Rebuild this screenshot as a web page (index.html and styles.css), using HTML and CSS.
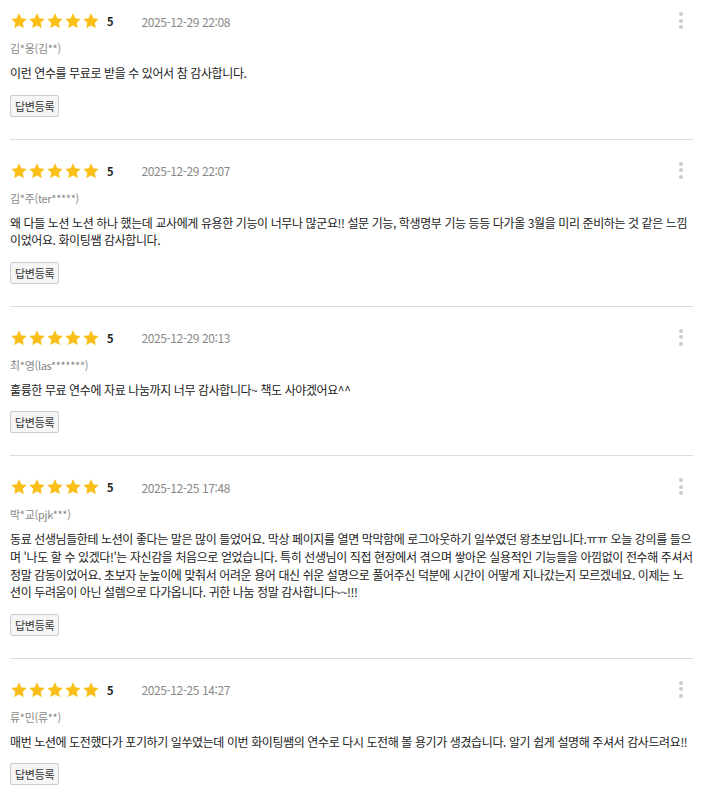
FILE: index.html
```html
<!DOCTYPE html>
<html lang="ko">
<head>
<meta charset="utf-8">
<link rel="stylesheet" href="styles.css">
</head>
<body>
<svg width="0" height="0" class="defs">
  <defs>
    <symbol id="star" viewBox="0 0 24 24"><path d="M12 1.8l3.1 6.6 7.2.9-5.3 5 1.4 7.1L12 17.9l-6.4 3.5 1.4-7.1-5.3-5 7.2-.9z" fill="#FBBF1A"/></symbol>
  </defs>
</svg>
<ul class="reviews">
  <li class="review">
    <div class="head">
      <span class="stars"><svg><use href="#star"/></svg><svg><use href="#star"/></svg><svg><use href="#star"/></svg><svg><use href="#star"/></svg><svg><use href="#star"/></svg></span>
      <span class="score">5</span>
      <span class="date">2025-12-29 22:08</span>
      <span class="more"><i></i><i></i><i></i></span>
    </div>
    <div class="name">김*웅(김**)</div>
    <p class="text">이런 연수를 무료로 받을 수 있어서 참 감사합니다.</p>
    <button class="reply">답변등록</button>
  </li>
  <li class="review">
    <div class="head">
      <span class="stars"><svg><use href="#star"/></svg><svg><use href="#star"/></svg><svg><use href="#star"/></svg><svg><use href="#star"/></svg><svg><use href="#star"/></svg></span>
      <span class="score">5</span>
      <span class="date">2025-12-29 22:07</span>
      <span class="more"><i></i><i></i><i></i></span>
    </div>
    <div class="name">김*주(ter*****)</div>
    <p class="text">왜 다들 노션 노션 하나 했는데 교사에게 유용한 기능이 너무나 많군요!! 설문 기능, 학생명부 기능 등등 다가올 3월을 미리 준비하는 것 같은 느낌이었어요. 화이팅쌤 감사합니다.</p>
    <button class="reply">답변등록</button>
  </li>
  <li class="review">
    <div class="head">
      <span class="stars"><svg><use href="#star"/></svg><svg><use href="#star"/></svg><svg><use href="#star"/></svg><svg><use href="#star"/></svg><svg><use href="#star"/></svg></span>
      <span class="score">5</span>
      <span class="date">2025-12-29 20:13</span>
      <span class="more"><i></i><i></i><i></i></span>
    </div>
    <div class="name">최*영(las*******)</div>
    <p class="text">훌륭한 무료 연수에 자료 나눔까지 너무 감사합니다~ 책도 사야겠어요^^</p>
    <button class="reply">답변등록</button>
  </li>
  <li class="review">
    <div class="head">
      <span class="stars"><svg><use href="#star"/></svg><svg><use href="#star"/></svg><svg><use href="#star"/></svg><svg><use href="#star"/></svg><svg><use href="#star"/></svg></span>
      <span class="score">5</span>
      <span class="date">2025-12-25 17:48</span>
      <span class="more"><i></i><i></i><i></i></span>
    </div>
    <div class="name">박*교(pjk***)</div>
    <p class="text">동료 선생님들한테 노션이 좋다는 말은 많이 들었어요. 막상 페이지를 열면 막막함에 로그아웃하기 일쑤였던 왕초보입니다.ㅠㅠ 오늘 강의를 들으며 '나도 할 수 있겠다!'는 자신감을 처음으로 얻었습니다. 특히 선생님이 직접 현장에서 겪으며 쌓아온 실용적인 기능들을 아낌없이 전수해 주셔서 정말 감동이었어요. 초보자 눈높이에 맞춰서 어려운 용어 대신 쉬운 설명으로 풀어주신 덕분에 시간이 어떻게 지나갔는지 모르겠네요. 이제는 노션이 두려움이 아닌 설렘으로 다가옵니다. 귀한 나눔 정말 감사합니다~~!!!</p>
    <button class="reply">답변등록</button>
  </li>
  <li class="review">
    <div class="head">
      <span class="stars"><svg><use href="#star"/></svg><svg><use href="#star"/></svg><svg><use href="#star"/></svg><svg><use href="#star"/></svg><svg><use href="#star"/></svg></span>
      <span class="score">5</span>
      <span class="date">2025-12-25 14:27</span>
      <span class="more"><i></i><i></i><i></i></span>
    </div>
    <div class="name">류*민(류**)</div>
    <p class="text">매번 노션에 도전했다가 포기하기 일쑤였는데 이번 화이팅쌤의 연수로 다시 도전해 볼 용기가 생겼습니다. 알기 쉽게 설명해 주셔서 감사드려요!!</p>
    <button class="reply">답변등록</button>
  </li>
</ul>
</body>
</html>
```

FILE: styles.css
```css
html, body {
  margin: 0;
  padding: 0;
  background: #fff;
}
body {
  font-family: "Noto Sans CJK KR", "Noto Sans", sans-serif;
  color: #222;
  font-size: 12px;
}
.defs {
  position: absolute;
  width: 0;
  height: 0;
}
.reviews {
  list-style: none;
  margin: 0;
  padding: 0 30px 0 10px;
}
.review {
  padding: 12px 0 22px;
  border-bottom: 1px solid #ddd;
}
.review + .review {
  padding-top: 22px;
}
.head {
  display: flex;
  align-items: center;
  height: 18px;
  position: relative;
}
.stars {
  display: flex;
  gap: 0;
}
.stars svg {
  width: 18px;
  height: 18px;
  display: block;
}
.score {
  margin-left: 7px;
  font-weight: bold;
  font-size: 11px;
  color: #222;
}
.date {
  margin-left: 28px;
  color: #888;
  font-size: 12px;
  letter-spacing: -0.4px;
}
.more {
  position: absolute;
  right: 10px;
  top: 0;
  display: flex;
  flex-direction: column;
  gap: 2.5px;
}
.more i {
  display: block;
  width: 4px;
  height: 4px;
  border-radius: 50%;
  background: #ccc;
}
.name {
  margin-top: 10px;
  font-size: 11px;
  line-height: 16px;
  color: #888;
  letter-spacing: -0.3px;
}
.text {
  margin: 8px 0 0;
  font-size: 12px;
  line-height: 17.6px;
  color: #222;
  letter-spacing: -0.4px;
}
.reply {
  margin-top: 13px;
  display: block;
  font-family: inherit;
  font-size: 11px;
  line-height: 16px;
  height: 22px;
  padding: 2px 4px;
  color: #333;
  background: #f5f5f5;
  border: 1px solid #ccc;
  border-radius: 2px;
  letter-spacing: -0.3px;
}
```
